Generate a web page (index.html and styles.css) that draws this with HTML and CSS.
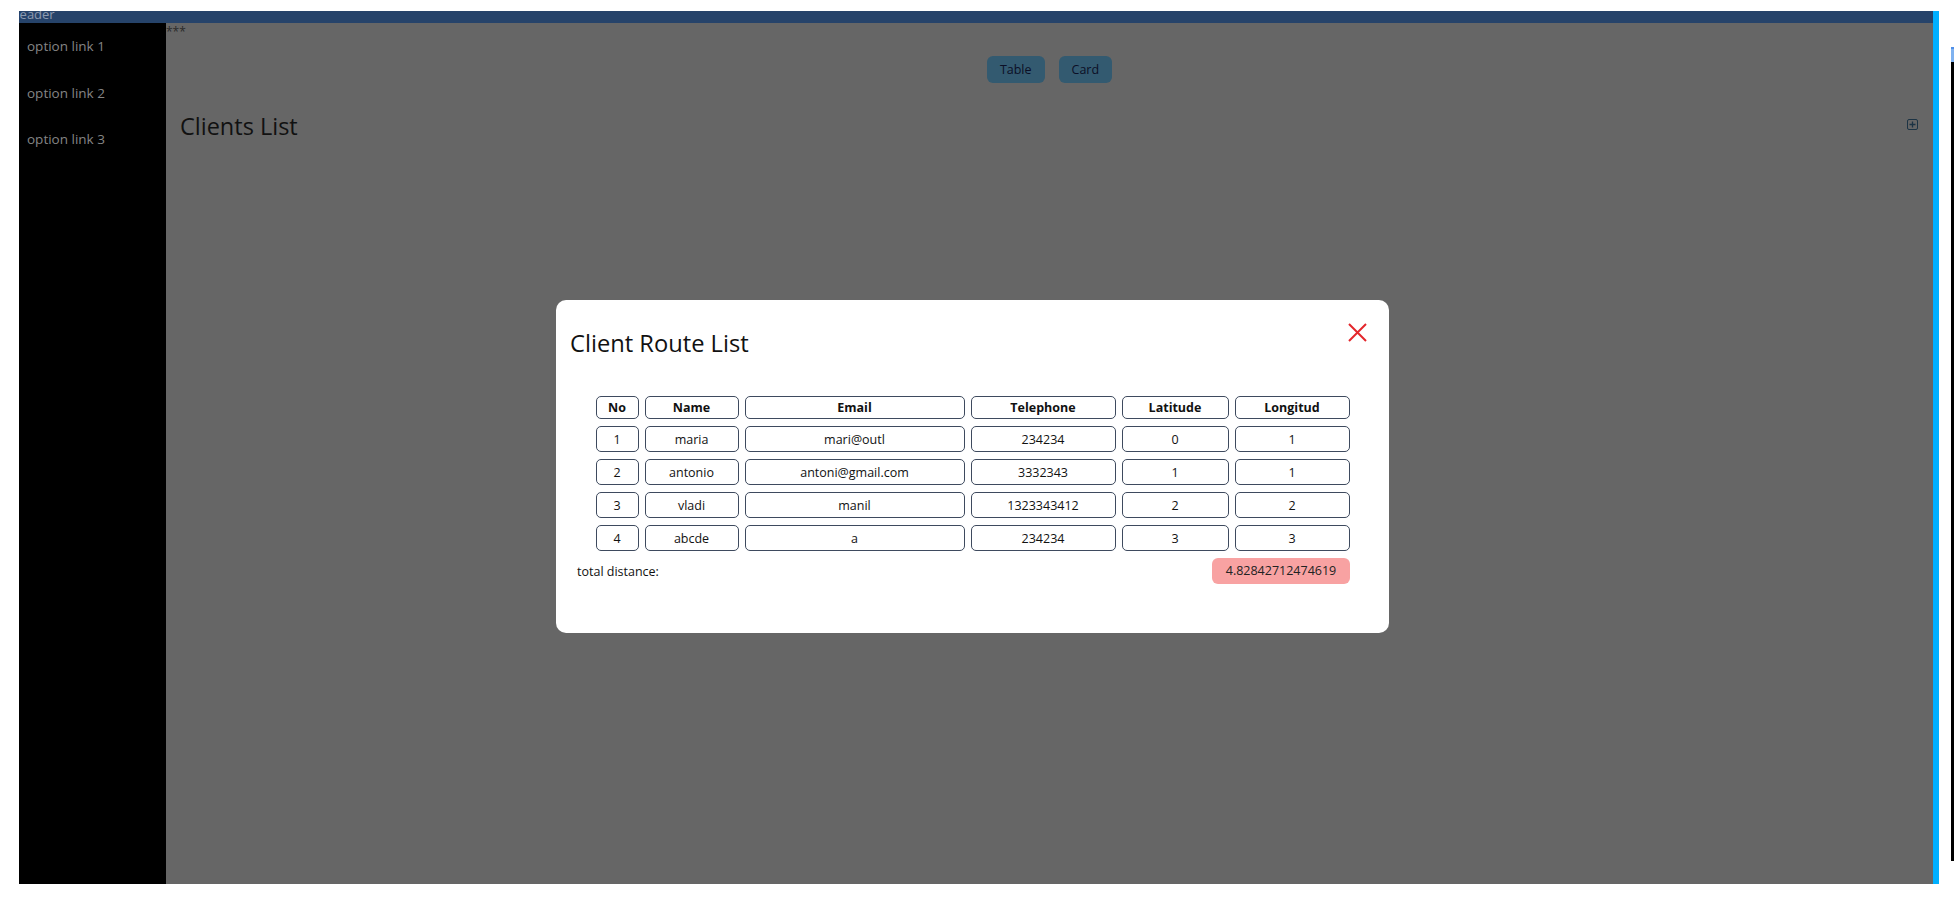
FILE: index.html
```html
<!DOCTYPE html>
<html lang="en">
<head>
<meta charset="utf-8">
<title>Clients</title>
<link rel="stylesheet" href="styles.css">
</head>
<body>
<div class="page">
  <div class="app">
    <div class="header"><span class="header-text">Header</span></div>
    <div class="body-row">
      <nav class="sidebar">
        <a class="side-link">option link 1</a>
        <a class="side-link">option link 2</a>
        <a class="side-link">option link 3</a>
      </nav>
      <main class="main">
        <div class="stars">***</div>
        <div class="view-switch">
          <button class="view-btn">Table</button>
          <button class="view-btn">Card</button>
        </div>
        <div class="title-row">
          <h1 class="page-title">Clients List</h1>
          <svg class="add-icon" width="11" height="11" viewBox="0 0 11 11">
            <rect x="0.5" y="0.5" width="10" height="10" rx="1.5" fill="none" stroke="#1c3344" stroke-width="1"/>
            <path d="M5.5 2.5v6M2.5 5.5h6" stroke="#1c3344" stroke-width="1.3"/>
          </svg>
        </div>
      </main>
    </div>
  </div>
  <div class="side-strip"><div class="strip-cap"></div><div class="strip-bar"></div></div>

  <div class="modal">
    <div class="modal-head">
      <h2 class="modal-title">Client Route List</h2>
      <svg class="close-icon" width="19" height="19" viewBox="0 0 19 19">
        <path d="M1 1L18 18M18 1L1 18" stroke="#e3262b" stroke-width="2"/>
      </svg>
    </div>
    <table class="route-table">
      <thead>
        <tr><th class="c-no">No</th><th class="c-name">Name</th><th class="c-email">Email</th><th class="c-tel">Telephone</th><th class="c-lat">Latitude</th><th class="c-lon">Longitud</th></tr>
      </thead>
      <tbody>
        <tr><td>1</td><td>maria</td><td>mari@outl</td><td>234234</td><td>0</td><td>1</td></tr>
        <tr><td>2</td><td>antonio</td><td>antoni@gmail.com</td><td>3332343</td><td>1</td><td>1</td></tr>
        <tr><td>3</td><td>vladi</td><td>manil</td><td>1323343412</td><td>2</td><td>2</td></tr>
        <tr><td>4</td><td>abcde</td><td>a</td><td>234234</td><td>3</td><td>3</td></tr>
      </tbody>
    </table>
    <div class="total-row">
      <span class="total-label">total distance:</span>
      <span class="total-badge">4.82842712474619</span>
    </div>
  </div>
</div>
</body>
</html>
```

FILE: styles.css
```css
html, body {
  margin: 0;
  padding: 0;
  background: #ffffff;
  font-family: "Open Sans", "Noto Sans", sans-serif;
}

.page {
  position: relative;
  width: 1954px;
  height: 914px;
  overflow: hidden;
  display: flex;
  align-items: flex-start;
  padding: 11px 0 0 19px;
  box-sizing: border-box;
}

.app {
  width: 1920px;
  height: 873px;
  display: flex;
  flex-direction: column;
  border-right: 6px solid #00b0ff;
  box-sizing: border-box;
  flex-shrink: 0;
}

.header {
  height: 12px;
  background: #26436a;
  overflow: hidden;
  flex-shrink: 0;
}

.header-text {
  display: block;
  margin: -6px 0 0 -9px;
  font-size: 13px;
  line-height: 18px;
  color: #8d9ab0;
}

.body-row {
  flex: 1;
  display: flex;
  min-height: 0;
}

.sidebar {
  width: 147px;
  background: #000000;
  display: flex;
  flex-direction: column;
  flex-shrink: 0;
}

.side-link {
  display: block;
  padding: 12px 8px;
  font-size: 13.5px;
  line-height: 22.5px;
  color: #858585;
}

.main {
  flex: 1;
  background: #666666;
  display: flex;
  flex-direction: column;
}

.stars {
  font-size: 12px;
  line-height: 17px;
  color: #2a2a2a;
  height: 17px;
}

.view-switch {
  display: flex;
  justify-content: center;
  gap: 14px;
  margin-top: 16px;
}

.view-btn {
  height: 27px;
  padding: 0 13px;
  border: none;
  border-radius: 6px;
  background: #335a70;
  color: #0c0f26;
  font-family: "Open Sans", "Noto Sans", sans-serif;
  font-size: 12.5px;
}

.title-row {
  display: flex;
  justify-content: space-between;
  align-items: flex-start;
  margin-top: 25px;
  padding: 0 15px 0 14px;
}

.page-title {
  margin: 0;
  font-size: 23.5px;
  font-weight: 400;
  line-height: 36px;
  color: #111111;
}

.add-icon {
  margin-top: 11px;
}

.side-strip {
  margin-left: 12px;
  margin-top: 36px;
  width: 6px;
  flex-shrink: 0;
  display: flex;
  flex-direction: column;
}

.strip-cap {
  height: 15px;
  background: #7fb2f0;
  border-top: 2px solid #4f8fe8;
  box-sizing: border-box;
}

.strip-bar {
  height: 799px;
  background: #000000;
}

/* modal lies over the page */
.modal {
  position: absolute;
  left: 556px;
  top: 300px;
  width: 833px;
  height: 333px;
  box-sizing: border-box;
  background: #ffffff;
  border-radius: 10px;
  padding: 25px 22px 0 14px;
}

.modal-head {
  display: flex;
  justify-content: space-between;
  align-items: flex-start;
}

.modal-title {
  margin: 0;
  font-size: 23.7px;
  font-weight: 400;
  line-height: 36px;
  color: #111111;
}

.close-icon {
  margin-top: -2px;
}

.route-table {
  margin: 28px auto 0;
  border-collapse: separate;
  border-spacing: 6px 7px;
  position: relative;
  left: 4px;
  font-size: 12.5px;
  color: #111111;
}

.route-table th,
.route-table td {
  border: 1px solid #3e4a5e;
  border-radius: 5px;
  text-align: center;
  padding: 0;
  box-sizing: border-box;
}

.route-table th {
  height: 23px;
  font-weight: 700;
}

.route-table td {
  height: 26px;
}

.c-no { width: 43px; }
.c-name { width: 94px; }
.c-email { width: 220px; }
.c-tel { width: 145px; }
.c-lat { width: 107px; }
.c-lon { width: 115px; }

.total-row {
  display: flex;
  justify-content: space-between;
  align-items: center;
  margin: 0 17px 0 7px;
}

.total-label {
  font-size: 12.5px;
  color: #111111;
}

.total-badge {
  width: 138px;
  height: 26px;
  line-height: 26px;
  text-align: center;
  border-radius: 6px;
  background: #f8a2a2;
  font-size: 12.5px;
  color: #222222;
}
```
